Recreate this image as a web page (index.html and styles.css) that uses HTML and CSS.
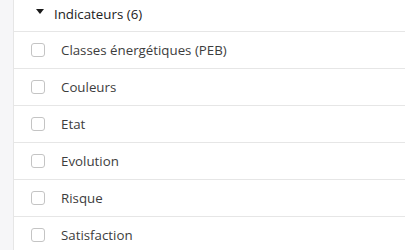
FILE: index.html
```html
<!DOCTYPE html>
<html>
<head>
<meta charset="utf-8">
<link rel="stylesheet" href="styles.css">
</head>
<body>
<div class="layout">
  <div class="strip"></div>
  <div class="panel">
    <div class="header">
      <span class="caret"></span>
      <span class="title">Indicateurs (6)</span>
    </div>
    <div class="row"><span class="box"></span><span class="label">Classes énergétiques (PEB)</span></div>
    <div class="row"><span class="box"></span><span class="label">Couleurs</span></div>
    <div class="row"><span class="box"></span><span class="label">Etat</span></div>
    <div class="row"><span class="box"></span><span class="label">Evolution</span></div>
    <div class="row"><span class="box"></span><span class="label">Risque</span></div>
    <div class="row"><span class="box"></span><span class="label">Satisfaction</span></div>
  </div>
</div>
</body>
</html>
```
FILE: styles.css
```css
html, body {
  margin: 0;
  padding: 0;
  background: #ffffff;
}
body {
  font-family: "Open Sans", "Noto Sans", sans-serif;
  font-size: 13.3px;
  color: #3a3a3a;
}
.layout {
  display: flex;
  height: 250px;
  overflow: hidden;
}
.strip {
  width: 13px;
  flex: none;
  background: #f6f6f8;
  border-right: 1px solid #e6e6e6;
}
.panel {
  flex: 1;
  display: flex;
  flex-direction: column;
}
.header {
  height: 32px;
  flex: none;
  box-sizing: border-box;
  border-bottom: 1px solid #e6e6e6;
  display: flex;
  align-items: center;
  padding-left: 22px;
  padding-bottom: 3px;
}
.caret {
  width: 0;
  height: 0;
  border-left: 4px solid transparent;
  border-right: 4px solid transparent;
  border-top: 5px solid #1a1a1a;
  margin-right: 10px;
  margin-top: -6px;
}
.title {
  color: #222222;
}
.row {
  height: 37px;
  flex: none;
  box-sizing: border-box;
  border-bottom: 1px solid #e6e6e6;
  display: flex;
  align-items: center;
  padding-left: 17px;
}
.box {
  width: 14px;
  height: 14px;
  box-sizing: border-box;
  border: 1px solid #c4c4c4;
  border-radius: 3px;
  margin-right: 16px;
  flex: none;
}
.label {
  color: #3d3d3d;
}
```
